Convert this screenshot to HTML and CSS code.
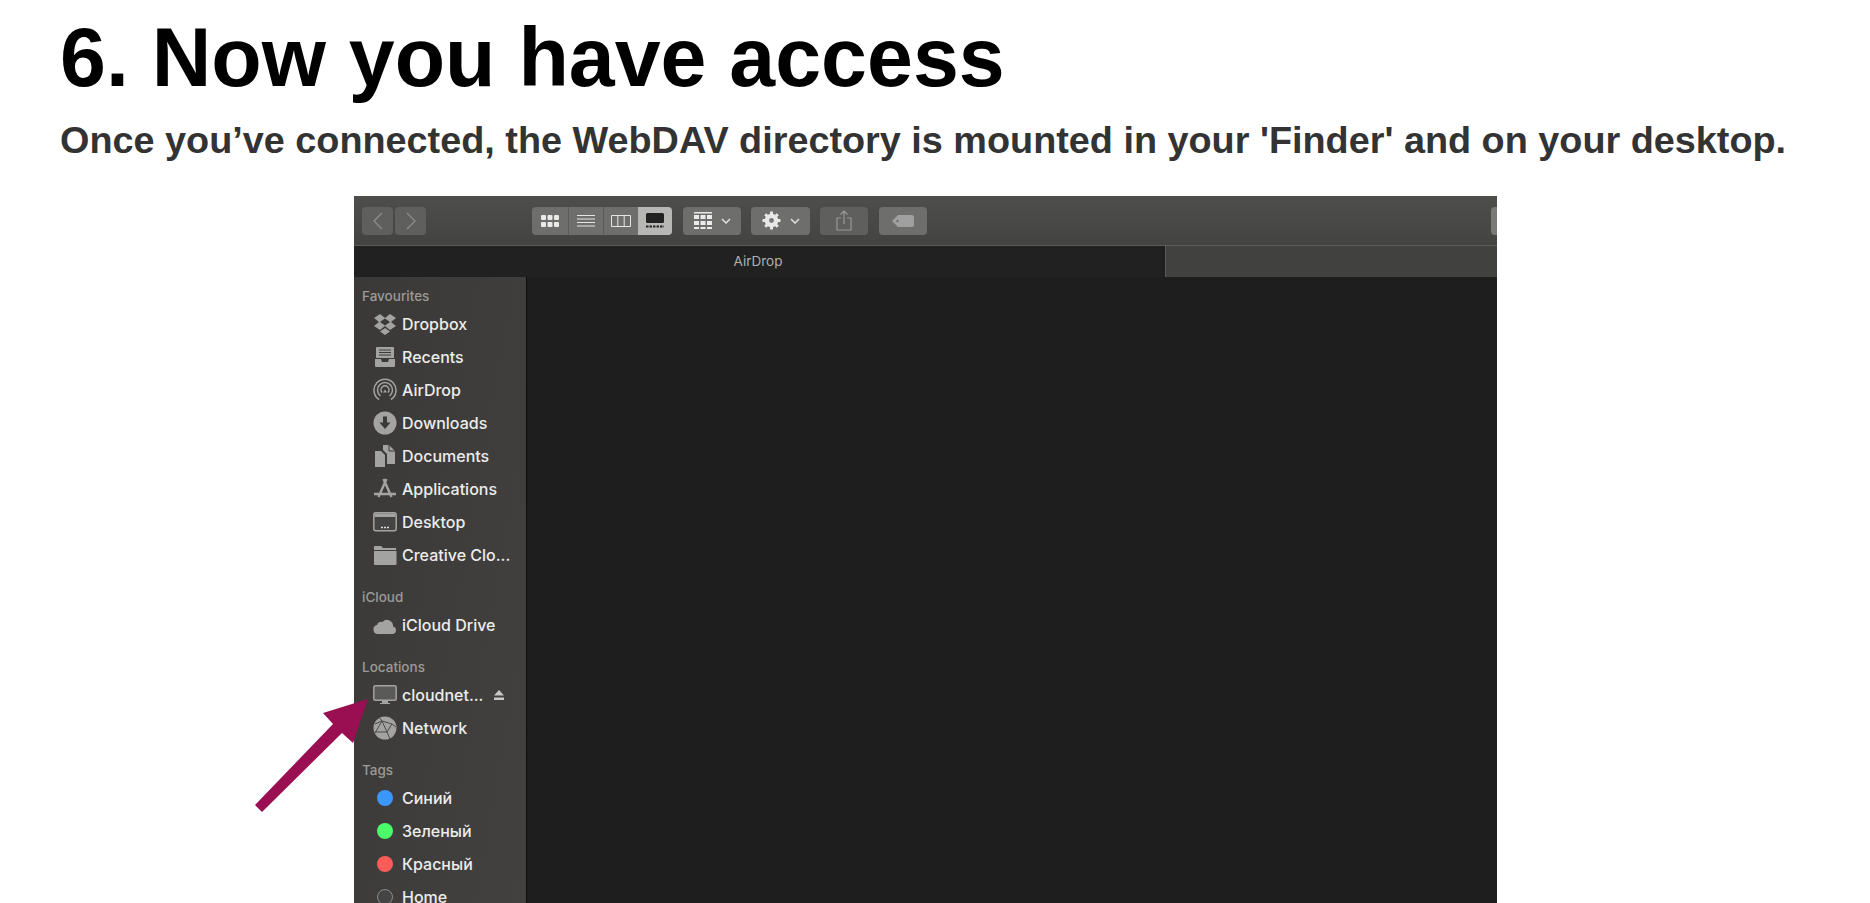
FILE: index.html
```html
<!DOCTYPE html>
<html lang="en">
  <head>
    <meta charset="UTF-8">
    <meta name="viewport" content="width=device-width, initial-scale=1.0">
    <link rel="stylesheet" href="styles.css">
    <title>Now you have access</title>
  </head>
  <body>
    <main class="step">
      <h1 class="step-title">6. Now you have access</h1>
      <h2 class="step-text">Once you’ve connected, the WebDAV directory is mounted in your 'Finder' and on your desktop.</h2>
      <div class="shot">
        <div class="finder">
          <div class="toolbar">
            <div class="nav">
              <span class="btn btn-nav"><svg width="12" height="20" viewBox="0 0 12 20"><path d="M10 2 2 10l8 8" class="line"/></svg></span>
              <span class="btn btn-nav"><svg width="12" height="20" viewBox="0 0 12 20"><path d="M2 2l8 8-8 8" class="line"/></svg></span>
            </div>
            <div class="views">
              <span class="view">
                <svg width="18" height="12" viewBox="0 0 18 12"><g class="fill"><rect x="0" y="0" width="5" height="5" rx="1"/><rect x="6.5" y="0" width="5" height="5" rx="1"/><rect x="13" y="0" width="5" height="5" rx="1"/><rect x="0" y="7" width="5" height="5" rx="1"/><rect x="6.5" y="7" width="5" height="5" rx="1"/><rect x="13" y="7" width="5" height="5" rx="1"/></g></svg>
              </span>
              <span class="view">
                <svg width="20" height="14" viewBox="0 0 20 14"><path d="M1 1.5h18M1 5h18M1 8.5h18M1 12h18" class="thin"/></svg>
              </span>
              <span class="view">
                <svg width="20" height="14" viewBox="0 0 20 14"><path d="M.5 1.5h19v11H.5zM6.8 1.5v11M13.2 1.5v11" class="thin"/></svg>
              </span>
              <span class="view view-on">
                <svg width="20" height="16" viewBox="0 0 20 16"><rect x="1" y="0" width="18" height="10" rx="1.5" fill="#222"/><path d="M1 13.5h18" stroke="#222" stroke-width="2" stroke-dasharray="2.5 1"/></svg>
              </span>
            </div>
            <span class="btn btn-menu btn-group">
              <svg width="18" height="17" viewBox="0 0 18 17"><g class="fill"><rect x="0" y="0" width="18" height="1.5"/><rect x="0" y="3" width="5" height="4"/><rect x="6.5" y="3" width="5" height="4"/><rect x="13" y="3" width="5" height="4"/><rect x="0" y="9" width="5" height="4"/><rect x="6.5" y="9" width="5" height="4"/><rect x="13" y="9" width="5" height="4"/><rect x="0" y="15" width="5" height="2"/><rect x="6.5" y="15" width="5" height="2"/><rect x="13" y="15" width="5" height="2"/></g></svg>
              <svg width="10" height="6" viewBox="0 0 10 6"><path d="M1 1l4 4 4-4" class="chev"/></svg>
            </span>
            <span class="btn btn-menu btn-gear">
              <svg width="19" height="19" viewBox="0 0 19 19"><circle cx="9.5" cy="9.5" r="5" fill="none" stroke="#e8e8e8" stroke-width="3.6"/><path d="M9.5 .5v18M.5 9.5h18M3.2 3.2l12.6 12.6M15.8 3.2 3.2 15.8" stroke="#e8e8e8" stroke-width="3"/><circle cx="9.5" cy="9.5" r="2.4" fill="#777"/></svg>
              <svg width="10" height="6" viewBox="0 0 10 6"><path d="M1 1l4 4 4-4" class="chev"/></svg>
            </span>
            <span class="btn btn-share">
              <svg width="16" height="21" viewBox="0 0 16 21"><path d="M5 8H1v12h14V8h-4M8 14V1M4.5 4.5 8 1l3.5 3.5" fill="none" stroke="#999" stroke-width="1.2"/></svg>
            </span>
            <span class="btn btn-tag">
              <svg width="22" height="12" viewBox="0 0 22 12"><path d="M6 0h14a2 2 0 0 1 2 2v8a2 2 0 0 1-2 2H6L0 6z" fill="#a0a0a0"/><circle cx="5.5" cy="6" r="1.2" fill="#6e6e6d"/></svg>
            </span>
            <span class="btn btn-search"></span>
          </div>
          <div class="tabs">
            <div class="tab tab-on">AirDrop</div>
            <div class="tab"></div>
          </div>
          <div class="body">
            <aside class="sidebar">
              <h3 class="side-head">Favourites</h3>
              <div class="side-row">
                <svg class="ico" width="24" height="22" viewBox="0 0 24 22"><path class="ico-fill" d="M7 1 1 5l5 4-5 4 6 4 5-4 5 4 6-4-5-4 5-4-6-4-5 4zM12 5.5 17 9l-5 3.5L7 9zM7 18.5l5-3.5 5 3.5-5 3.5z"/></svg>
                <span>Dropbox</span>
              </div>
              <div class="side-row">
                <svg class="ico" width="24" height="22" viewBox="0 0 24 22"><path class="ico-fill" d="M4 1h16a1 1 0 0 1 1 1v10H3V2a1 1 0 0 1 1-1zM2 13h6l1 3h6l1-3h6v7a1 1 0 0 1-1 1H3a1 1 0 0 1-1-1z"/><path d="M6 4h12M6 6.5h12M6 9h12" stroke="#3d3c3a" stroke-width="1"/></svg>
                <span>Recents</span>
              </div>
              <div class="side-row">
                <svg class="ico" width="24" height="24" viewBox="0 0 24 24"><g fill="none" stroke="#a3a3a1" stroke-width="1.5"><path d="M6 21.5a11 11 0 1 1 12 0"/><path d="M7.5 18a7.5 7.5 0 1 1 9 0"/><path d="M9 14.5a4 4 0 1 1 6 0"/></g><path class="ico-fill" d="M12 11.5l2 3h-4z"/></svg>
                <span>AirDrop</span>
              </div>
              <div class="side-row">
                <svg class="ico" width="24" height="24" viewBox="0 0 24 24"><circle class="ico-fill" cx="12" cy="12" r="11.5"/><path d="M10 5.5h4v6h3.5L12 18l-5.500-6.500H10z" fill="#3a3937"/></svg>
                <span>Downloads</span>
              </div>
              <div class="side-row">
                <svg class="ico" width="22" height="24" viewBox="0 0 22 24"><path class="ico-fill" d="M1 7h6l4 4v12H1zM9 1h6l6 6v13h-8V10L9 6z"/><path d="M15 1v6h6" stroke="#3a3937" fill="none"/></svg>
                <span>Documents</span>
              </div>
              <div class="side-row">
                <svg class="ico" width="24" height="22" viewBox="0 0 24 22"><path d="M10.5 1l8 18M13.5 1l-8 18M1 16h22" fill="none" stroke="#a3a3a1" stroke-width="2.4"/></svg>
                <span>Applications</span>
              </div>
              <div class="side-row">
                <svg class="ico" width="24" height="20" viewBox="0 0 24 20"><rect x=".8" y=".8" width="22.4" height="18" rx="2" fill="#444" stroke="#a3a3a1" stroke-width="1.5"/><rect x="1.5" y="1.5" width="21" height="3.5" fill="#a3a3a1"/><path d="M8 15.5h8" stroke="#ddd" stroke-width="1.5" stroke-dasharray="2 1"/></svg>
                <span>Desktop</span>
              </div>
              <div class="side-row">
                <svg class="ico" width="24" height="20" viewBox="0 0 24 20"><path class="ico-fill" d="M1 2a1 1 0 0 1 1-1h6l2 2h13v2H1zM1 6h22.5v13a1 1 0 0 1-1 1H2a1 1 0 0 1-1-1z"/></svg>
                <span>Creative Clo...</span>
              </div>

              <h3 class="side-head side-head-gap">iCloud</h3>
              <div class="side-row">
                <svg class="ico" width="24" height="17" viewBox="0 0 24 17"><path class="ico-fill" d="M5 17a4.5 4.5 0 0 1-1-8.900A4 4 0 0 1 9.500 5 6 6 0 0 1 20 9.500 3.800 3.800 0 0 1 19.500 17z"/></svg>
                <span>iCloud Drive</span>
              </div>

              <h3 class="side-head side-head-gap">Locations</h3>
              <div class="side-row">
                <svg class="ico" width="24" height="20" viewBox="0 0 24 20"><rect x=".8" y=".8" width="22.4" height="14.5" rx="1.5" fill="#5a5a58" stroke="#a3a3a1" stroke-width="1.5"/><path d="M9 16h6v2h2v1H7v-1h2z" fill="#a3a3a1"/></svg>
                <span>cloudnet...</span>
                <svg class="eject" width="10" height="10" viewBox="0 0 10 10"><path d="M5 0l5 5.5H0zM0 7.5h10V10H0z" fill="#c8c8c6"/></svg>
              </div>
              <div class="side-row">
                <svg class="ico" width="24" height="24" viewBox="0 0 24 24"><circle class="ico-fill" cx="12" cy="12" r="11.5"/><g stroke="#4a4a48" stroke-width="1" fill="none"><path d="M2 17 9 5l10 3-5 8H2M14 16l3 7M9 5l5 11M19 8l4 3M9 5 6 1M9 5 2 8"/></g></svg>
                <span>Network</span>
              </div>

              <h3 class="side-head side-head-gap">Tags</h3>
              <div class="side-row"><i class="dot dot-blue"></i><span>Синий</span></div>
              <div class="side-row"><i class="dot dot-green"></i><span>Зеленый</span></div>
              <div class="side-row"><i class="dot dot-red"></i><span>Красный</span></div>
              <div class="side-row"><i class="dot dot-none"></i><span>Home</span></div>
            </aside>
            <div class="content"></div>
          </div>
        </div>
        <svg class="arrow" width="130" height="130" viewBox="0 0 130 130"><polygon points="123,3 108,47 97,37 17,116 10,109 88,28 78,17" fill="#990f52"/></svg>
      </div>
    </main>
  </body>
</html>
```

FILE: styles.css
```css
* {
margin: 0;
padding: 0;
box-sizing: border-box;
}
html {
height: 100%;
overflow: hidden;
}
body {
height: 100%;
overflow: hidden;
background-color: #fff;
font-family: "Liberation Sans", Arial, sans-serif;
}
.step {
padding: 0 60px;
}
.step-title {
font-size: 82.5px;
line-height: 92px;
font-weight: 700;
color: #000;
padding-top: 11px;
white-space: nowrap;
}
.step-text {
font-size: 37.8px;
line-height: 42px;
font-weight: 700;
color: #333;
margin-top: 16px;
white-space: nowrap;
}
.shot {
position: relative;
width: 1143px;
margin: 35px 0 0 294px;
}
.arrow {
position: absolute;
left: -109px;
top: 500px;
}

/* finder window */
.finder {
width: 1143px;
height: 720px;
background-color: #1e1e1e;
font-family: Inter, "Noto Sans", sans-serif;
overflow: hidden;
}
.toolbar {
height: 50px;
display: flex;
align-items: center;
padding: 0 0 0 8px;
background: linear-gradient(#4e4e4d, #434342);
border-bottom: 1px solid #5c5c5b;
}
.nav {
display: flex;
gap: 2px;
}
.btn {
height: 28px;
border-radius: 4px;
background-color: #6e6e6d;
display: flex;
align-items: center;
justify-content: center;
}
.btn-nav {
width: 31px;
background-color: #5f5f5e;
}
.line {
fill: none;
stroke: #8b8b8a;
stroke-width: 1.4;
}
.thin {
fill: none;
stroke: #e6e6e6;
stroke-width: 1;
}
.fill {
fill: #eaeaea;
}
.chev {
fill: none;
stroke: #e0e0e0;
stroke-width: 1.5;
}
.views {
display: flex;
height: 28px;
margin-left: 106px;
border-radius: 4px;
overflow: hidden;
background-color: #6e6e6d;
}
.view {
width: 35px;
display: flex;
align-items: center;
justify-content: center;
border-left: 1px solid #5b5b5a;
}
.view:first-child {
width: 36px;
border-left: none;
}
.view-on {
width: 34px;
background-color: #b7b7b6;
border-left: none;
}
.btn-menu {
gap: 9px;
margin-left: 11px;
}
.btn-group {
width: 58px;
}
.btn-gear {
width: 59px;
margin-left: 10px;
}
.btn-share {
width: 48px;
margin-left: 10px;
background-color: #5f5f5e;
}
.btn-tag {
width: 48px;
margin-left: 11px;
background-color: #6e6e6d;
}
.btn-search {
width: 20px;
margin-left: auto;
margin-right: -14px;
background-color: #7a7a79;
}
.tabs {
height: 31px;
display: flex;
}
.tab {
flex: 1;
display: flex;
align-items: center;
justify-content: center;
font-size: 13.5px;
color: #b0b0b0;
background-color: #414140;
border-left: 1px solid #5c5c5b;
padding-bottom: 2px;
}
.tab-on {
flex: 0 0 808px;
background-color: #212121;
border-left: none;
}
.tab:last-child {
margin-left: 3px;
}
.body {
display: flex;
height: 640px;
}
.sidebar {
width: 173px;
flex-shrink: 0;
background: linear-gradient(100deg, #3a3937, #42413f);
border-right: 1px solid #0d0d0d;
padding: 10px 0 0 8px;
}
.side-head {
font-size: 13.5px;
line-height: 18px;
font-weight: 500;
color: #9b9a98;
margin-bottom: 2.5px;
}
.side-head-gap {
margin-top: 16.5px;
}
.side-row {
height: 33px;
display: flex;
align-items: center;
font-size: 16px;
font-weight: 500;
color: #ececec;
padding-left: 11px;
white-space: nowrap;
}
.ico {
width: 24px;
flex-shrink: 0;
margin-right: 5px;
}
.ico-fill {
fill: #a3a3a1;
}
.eject {
margin-left: 11px;
}
.dot {
width: 16px;
height: 16px;
border-radius: 50%;
margin: 0 9px 0 4px;
flex-shrink: 0;
}
.dot-blue {
background-color: #3c97fd;
}
.dot-green {
background-color: #4cfb68;
}
.dot-red {
background-color: #fc5c57;
}
.dot-none {
border: 1.5px solid #8a8a88;
background-color: #444;
}
.content {
flex: 1;
background-color: #1e1e1e;
}
```
